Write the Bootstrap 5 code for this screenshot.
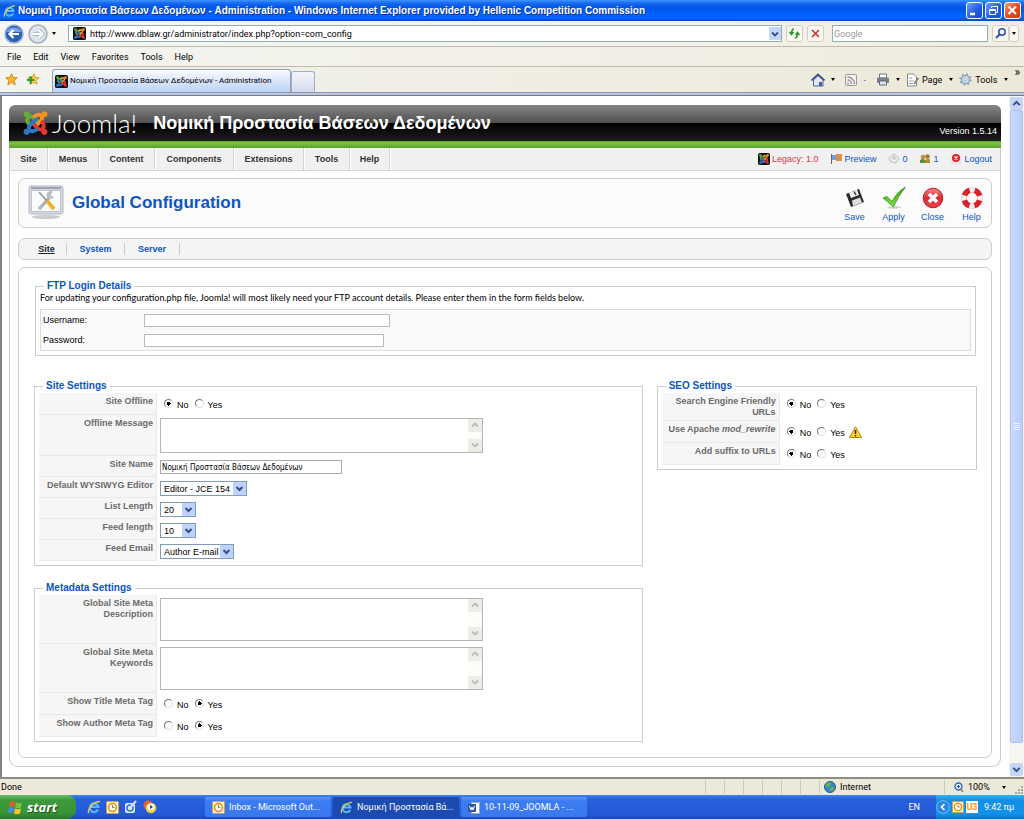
<!DOCTYPE html>
<html lang="el">
<head>
<meta charset="utf-8">
<meta name="viewport" content="width=device-width, initial-scale=1">
<title>Νομική Προστασία Βάσεων Δεδομένων - Administration</title>
<link rel="stylesheet" href="https://cdn.jsdelivr.net/npm/bootstrap@5.3.0/dist/css/bootstrap.min.css">
<style>
:root{--line:#ccc;--link:#0b55c4}
body{font-family:"Liberation Sans",sans-serif;font-size:9px;line-height:12px;color:#333;background:#fff}
a{color:inherit;text-decoration:none}
svg{display:block;flex:none}
.ui{font-family:Roboto,sans-serif;font-size:9px;color:#000}
.plain{border:0;background:none;padding:0;color:inherit;font:inherit}

/* window title */
.titlebar{height:21px;padding:0 3px;background:linear-gradient(#3c95ff 0,#1b6cf2 3px,#0055e5 7px,#0061fb 14px,#0066ff 18px,#0045c8 21px);color:#fff;gap:2px}
.titlebar h1{font:bold 10px/20px "Liberation Sans",sans-serif;margin:0;text-shadow:1px 1px #0a2f8c;white-space:nowrap}
.winbtn{width:17px;height:17px;border:1px solid #fff;border-radius:3px;padding:0;background:linear-gradient(135deg,#6f9bff,#2459dd 60%,#1a4fd0)}
.winbtn.quit{background:linear-gradient(135deg,#f29a7c,#e04e22 50%,#c83c12)}

/* browser rows */
.addressrow{height:26px;padding:0 5px 0 4px;background:linear-gradient(90deg,#f6f6f3,#f1efe3)}
.bar-edge{border-bottom:1px solid #bfbcae}
.field{height:17px;border:1px solid #8fb0b5;background:#fff}
.field input{border:0;padding:0;height:15px;outline:0;min-width:0}
.search{width:156px;padding-left:1px}
.search input::placeholder{color:#999;opacity:1}
.tinybtn{width:17px;height:17px;border:1px solid #d2cfc3;border-radius:3px;background:#f9f8f3;padding:0}
.tinybtn.slim{width:10px;padding:6px 2px}
.dropbtn{width:12px;height:13px;border:0;padding:0;background:#c6d6fb}
.menurow{height:20px;background:linear-gradient(90deg,#f4f4f0,#efecdf);padding-left:7px;gap:12px}
.tabrow{height:25px;background:linear-gradient(90deg,#f3f3ef,#ece9d8);padding:0 4px 0 5px}
.tab{width:239px;height:23px;border:1px solid #93a1b5;border-bottom:0;border-radius:3px 3px 0 0;background:linear-gradient(#fbfcff,#dfe9fb 40%,#bcd3f8);padding-left:2px;gap:2px;white-space:nowrap;font-size:8px}
.tabnew{width:24px;height:21px;border:1px solid #a5adc0;border-bottom:0;border-radius:3px 3px 0 0;background:linear-gradient(#f5f6fc,#d5dbee)}
.tabbase{height:4px;background:#bcc7e2;border-top:1px solid #8d97aa;border-bottom:1px solid #73788a}
.commands{gap:6px}
.commands a{gap:3px}
.tri{width:0;height:0;border:2px solid transparent;border-top:3px solid #000;border-bottom:0}
.more{font-size:12px;line-height:12px}

/* page area */
.view{border-left:2px solid #85857a}
.page{margin:9px 8px 8px 7px;border:1px solid var(--line);border-top:0;border-radius:6px 6px 9px 9px}
.brand{height:36px;margin:0 -1px;padding:0 4px 0 14px;border-radius:6px 6px 0 0;background:linear-gradient(#858585,#4f4f4f 18px,#000 18px,#1d1d1d);color:#fff}
.wordmark{font:300 26px/32px Lato,sans-serif}
.sitename{font-size:18px;line-height:36px;font-weight:bold;white-space:nowrap}
.green{height:7px;margin:0 -1px;background:linear-gradient(#5fa52c,#7cc440 30%,#5d9c33)}
.adminmenu{height:23px;background:#f0f0f0;border-bottom:1px solid #d5d5d5}
.adminmenu .entry{font-weight:bold;line-height:22px;text-align:center;border-right:1px solid #d5d5d5;box-shadow:1px 0 #fff}
.state{gap:2px;color:var(--link)}
.panel{border:1px solid var(--line);border-radius:7px;margin:0 8px}
.toolbox{height:50px;background:#fbfbfb;margin-top:7px;padding:0 0 0 9px}
.toolbox h2{font-size:17px;line-height:20px;font-weight:bold;color:var(--link);margin:0}
.tools{padding-top:4px}
.tool{width:39px;color:var(--link);line-height:12px}
.tool svg{margin:0 auto 2px}
.submenu{height:22px;background:#f4f4f4;margin-top:10px;padding-left:8px;font-weight:bold;color:var(--link)}
.submenu a{line-height:12px;text-align:center;border-right:1px solid var(--line)}
.settings{margin-top:7px;margin-bottom:8px;padding:12px 14px 15px 15px}
fieldset{border:1px solid var(--line)}
legend{float:none;width:auto;margin:0 0 0 4px;padding:0 3px;font-size:10px;line-height:12px;font-weight:bold;color:var(--link)}
.ftp{padding:0 4px 4px;margin:0 1px}
.ftp p{margin:0 0 5px;line-height:12px;color:#000;font-family:Lato,sans-serif}
.ftpbox{border:1px solid #ddd;background:#f9f9f9;padding:0 2px}
.ftprow{height:20px}
.ftpbox label{width:101px;color:#000}
.ftpbox input{height:13px;border:1px solid #bbb;background:#fff;padding:0 2px}
.columns{display:grid;grid-template-columns:19fr 10fr;gap:14px;margin-top:24px;align-items:start}
.group{padding:1px 4px 4px}
.setting{display:flex;min-height:21px}
.setting:has(.choice){min-height:22px}
.setting.tall{min-height:28px}
.caption{width:118px;flex:none;padding:3px 3px 0 0;font-weight:bold;line-height:11px;text-align:right;color:#6b6b6b;background:#f6f6f6;border-right:1px solid #e9e9e9;border-bottom:1px solid #e9e9e9}
.value{padding:4px 0 0 3px}
.value.area{padding-top:3px;padding-bottom:3px}
.areabox{display:flex;width:323px;border:1px solid #b5b5b5;background:#fff}
.areabox textarea{border:0;resize:none;flex:1;min-width:0;overflow:hidden;padding:1px;outline:0;font-size:9px}
.areabar{width:14px;background:#fbfbf8}
.areabar span{height:13px;background:#ededE6}
.short{height:35px}.long{height:43px}
.value.choice{display:flex;gap:6px;padding:5px 0 0 7px;color:#000}
.choice label{display:flex;align-items:flex-start;gap:4px;height:14px}
.choice label span{line-height:13px;padding-top:1px}
.choice input{appearance:none;width:9px;height:9px;margin:1px 0 0;border-radius:50%;border:1px solid;border-color:#777 #ddd #ddd #777;background:#fff;flex:none}
.choice input:checked{background:radial-gradient(circle,#000 0 2px,#fff 2px)}
.namebox{width:182px;height:14px;border:1px solid #aaa;padding:0 1px;color:#000;font-size:8px;font-family:"DejaVu Sans Condensed","DejaVu Sans",sans-serif}
.picker{appearance:none;height:15px;border:1px solid #7f9db9;padding:0 3px;font-size:9px;line-height:12px;color:#000;display:block;background:#fff url("data:image/svg+xml,%3Csvg xmlns='http://www.w3.org/2000/svg' width='13' height='13'%3E%3Crect width='13' height='13' rx='1' fill='%23bfd2fc'/%3E%3Cpath d='M3.500 5l3 3 3-3' fill='none' stroke='%23334f86' stroke-width='2'/%3E%3C/svg%3E") no-repeat right center}
.w-editor{width:87px}.w-count{width:36px}.w-mail{width:74px}

/* page scrollbar */
.rail{width:15px;background:#f6f5ef;padding:1px 1px}
.rail .cap{height:13px;border-radius:2px;background:#c6d6fb}
.rail .thumb{border:1px solid #aebff0;border-radius:2px;background:linear-gradient(90deg,#cbdafe,#b7cbfb)}

/* status and task bars */
.status{height:18px;background:#ece9d8;border-top:2px solid #8f8d80;padding:0 1px}
.status .cell{border-left:1px solid #cfccbd;height:14px}
.w-slot{width:19px}.w-zone{width:125px;padding-left:4px}.w-zoom{width:79px;padding-left:9px}
.taskbar{height:24px;background:linear-gradient(#3f86ec,#2860dc 4px,#2459d8 19px,#1d48b4)}
.taskbar.ui{color:#fff}
.start{width:76px;height:24px;border:0;padding:0 0 0 8px;border-radius:0 9px 9px 0;background:linear-gradient(#6fb96c,#3c9a3c 5px,#379437 18px,#2a762c);color:#fff;font:italic bold 13px/22px "Open Sans",sans-serif;text-shadow:1px 1px 1px #174a17;gap:4px}
.quick{width:121px;padding-left:11px;gap:5px}
.tasks{gap:2px}
.task{width:126px;height:20px;border:0;border-radius:2px;color:#fff;background:linear-gradient(#5b97fa,#3b7cf3 4px,#3a78ee);padding:0 7px;gap:4px;font-size:9px;white-space:nowrap}
.task.active{background:#1b4bb0}
.tray{width:88px;background:linear-gradient(#36b0f5,#1290e8 5px,#1191ea 19px,#0d70c0);gap:2px}
.usb{width:12px;line-height:12px;background:#fff;color:#ee9a1e;font-weight:bold;text-align:center}
</style>
</head>
<body class="d-flex flex-column min-vh-100">

<svg width="0" height="0" class="position-absolute" aria-hidden="true">
  <defs>
    <g id="arm"><circle cx="3.500" cy="3.500" r="2.900" fill="currentColor"/><path d="M6.500 14C1.500 9 5.500 3.500 9.500 6.500L16 13" fill="none" stroke="currentColor" stroke-width="3.700"/></g>
    <symbol id="joomla" viewBox="0 0 24 24">
      <use href="#arm" color="#5fae3a"/><use href="#arm" color="#f39324" transform="rotate(90 12 12)"/>
      <use href="#arm" color="#e5372b" transform="rotate(180 12 12)"/><use href="#arm" color="#2d78c4" transform="rotate(270 12 12)"/>
    </symbol>
    <symbol id="favicon" viewBox="0 0 14 14"><rect width="14" height="14" rx="2" fill="#111"/><use href="#joomla" x="1" y="1" width="12" height="12"/></symbol>
    <symbol id="ie" viewBox="0 0 14 14"><path d="M11 9.500A4.300 4.300 0 1 1 11.300 7H4" fill="none" stroke="#5bb7f5" stroke-width="2.200"/><path d="M2 13C-1 11 6 1.500 13 1.500" fill="none" stroke="#f3c84a" stroke-width="1.300"/></symbol>
    <symbol id="clock" viewBox="0 0 14 14"><rect x=".5" y=".5" width="13" height="13" rx="1" fill="#fff3c4" stroke="#e09a2a"/><circle cx="7" cy="7" r="4.200" fill="#fff" stroke="#d98a1e" stroke-width="1.600"/><path d="M7 4.500V7H9" fill="none" stroke="#a85a10"/></symbol>
    <symbol id="up" viewBox="0 0 12 12"><path d="M3 7.500L6 4.500L9 7.500" fill="none" stroke="currentColor" stroke-width="1.800"/></symbol>
    <symbol id="down" viewBox="0 0 12 12"><path d="M3 4.500L6 7.500L9 4.500" fill="none" stroke="currentColor" stroke-width="1.800"/></symbol>
    <linearGradient id="redball" x2="0" y2="1"><stop offset="0" stop-color="#f58a8c"/><stop offset=".5" stop-color="#dd2a32"/><stop offset="1" stop-color="#e8474c"/></linearGradient>
    <linearGradient id="leaf" x2="0" y2="1"><stop offset="0" stop-color="#3d9a14"/><stop offset="1" stop-color="#7be03a"/></linearGradient>
  </defs>
</svg>

<header class="ui">
  <div class="titlebar d-flex align-items-center">
    <svg width="13" height="14"><use href="#ie"/></svg>
    <h1 class="flex-grow-1 overflow-hidden">Νομική Προστασία Βάσεων Δεδομένων - Administration - Windows Internet Explorer provided by Hellenic Competition Commission</h1>
    <button class="winbtn" aria-label="Minimize"><svg width="15" height="15"><path d="M3 11h5" stroke="#fff" stroke-width="2.500"/></svg></button>
    <button class="winbtn" aria-label="Restore"><svg width="15" height="15" fill="none" stroke="#fff"><path d="M5.500 5V3.500H11.500V9.500H10M3.500 6.500H9.500V11.500H3.500ZM3.500 7.500H9.500"/></svg></button>
    <button class="winbtn quit" aria-label="Close window"><svg width="15" height="15"><path d="M3.500 3.500L11 11M11 3.500L3.500 11" stroke="#fff" stroke-width="2"/></svg></button>
  </div>

  <div class="addressrow bar-edge d-flex align-items-center">
    <button class="plain" aria-label="Back"><svg width="20" height="20"><circle cx="10" cy="10" r="9" fill="#2c62b6" stroke="#9db3d6" stroke-width="1.500"/><path d="M2.500 8a8 7 0 0 1 15 0z" fill="#7ba4de"/><path d="M15 10H6M9.500 6L5.500 10L9.500 14" fill="none" stroke="#fff" stroke-width="2.200"/></svg></button>
    <button class="plain ms-1" aria-label="Forward"><svg width="20" height="20"><circle cx="10" cy="10" r="9" fill="#dde4ee" stroke="#a5afbd" stroke-width="1.500"/><path d="M5 10H14M10.500 6L14.500 10L10.500 14" fill="none" stroke="#b4bccb" stroke-width="4"/><path d="M5 10H14M10.500 6L14.500 10L10.500 14" fill="none" stroke="#fff" stroke-width="2.200"/></svg></button>
    <span class="tri ms-1 me-1"></span>
    <div class="field d-flex align-items-center flex-grow-1 ms-2 me-1 ps-1 gap-1">
      <svg width="13" height="13"><use href="#favicon"/></svg>
      <input class="ui flex-grow-1" aria-label="Address" value="http://www.dblaw.gr/administrator/index.php?option=com_config">
      <button class="dropbtn" aria-label="Address history"><svg width="12" height="12" color="#334f86"><use href="#down"/></svg></button>
    </div>
    <button class="tinybtn me-1" aria-label="Refresh"><svg width="15" height="15" fill="none" stroke="#2c9b2c" stroke-width="1.600"><path d="M7 3C5 3 4.500 5 4.500 8M2.500 6L4.500 8.500L6.500 6M8 12C10 12 10.500 10 10.500 7M8.500 9L10.500 6.500L12.500 9"/></svg></button>
    <button class="tinybtn me-2" aria-label="Stop"><svg width="15" height="15"><path d="M4 4L11 11M11 4L4 11" stroke="#c8322c" stroke-width="1.600"/></svg></button>
    <div class="field search d-flex"><input class="ui w-100" aria-label="Search" placeholder="Google"></div>
    <button class="tinybtn ms-1" aria-label="Run search"><svg width="15" height="15" fill="none" stroke="#2a52b8"><circle cx="9" cy="6" r="3.200" stroke-width="1.600"/><path d="M6.500 8.500L3 12" stroke-width="2"/></svg></button>
    <button class="tinybtn slim" aria-label="Search options"><span class="tri d-block"></span></button>
  </div>

  <nav class="menurow bar-edge d-flex align-items-center" aria-label="Browser menu">
    <a href="#">File</a><a href="#">Edit</a><a href="#">View</a><a href="#">Favorites</a><a href="#">Tools</a><a href="#">Help</a>
  </nav>

  <div class="tabrow d-flex align-items-end">
    <div class="d-flex align-items-center gap-2 align-self-center pe-2 me-1">
      <svg width="13" height="13" viewBox="0 0 14 14"><path d="M7 .8L8.900 5H13.200L9.800 8L11 12.800L7 10L3 12.800L4.200 8L.8 5H5.100Z" fill="#fbb92c" stroke="#d57f12"/></svg>
      <svg width="14" height="13" viewBox="0 0 14 14"><path d="M8 .8L9.700 5H13.500L10.500 8L11.500 12L8 10L4 12L5 8L2 5H6.100Z" fill="#fbd14c" stroke="#d59a22"/><path d="M4.500 3.500V11.500M.5 7.500H8.500" stroke="#2d9a2d" stroke-width="2.400"/></svg>
    </div>
    <a href="#" class="tab d-flex align-items-center"><svg width="13" height="13"><use href="#favicon"/></svg>Νομική Προστασία Βάσεων Δεδομένων - Administration</a>
    <button class="tabnew" aria-label="New tab"></button>
    <div class="commands d-flex align-items-center ms-auto align-self-center">
      <button class="plain" aria-label="Home"><svg width="14" height="14"><path d="M2.500 7V13H12V7L7 2.500Z" fill="#dfe6f4" stroke="#55618c"/><path d="M.5 7.500L7 1.500L13.500 7.500" fill="none" stroke="#3b4c8c" stroke-width="1.700"/><path d="M8 9h3v4h-3z" fill="#3a5fae"/></svg></button>
      <span class="tri me-1"></span>
      <button class="plain" aria-label="Feeds"><svg width="12" height="12" fill="none" stroke="#999"><rect x=".5" y=".5" width="11" height="11" rx="1" fill="#eee"/><path d="M2.500 6A4 4 0 0 1 6.500 10M2.500 3A7 7 0 0 1 9.500 10" stroke-width="1.400"/><circle cx="3" cy="9.500" r=".7"/></svg></button>
      <span class="text-secondary">-</span>
      <button class="plain ms-1" aria-label="Print"><svg width="14" height="13"><path d="M3.500 1H10.500V5H3.500Z" fill="#fff" stroke="#777"/><rect x="1" y="4.500" width="12" height="5.500" rx="1" fill="#7b8190"/><path d="M3.500 8H10.500V12H3.500Z" fill="#dfe7f5" stroke="#666"/></svg></button>
      <span class="tri"></span>
      <a href="#" class="d-flex align-items-center"><svg width="13" height="14"><path d="M1.500 1H7.500L10.500 4V13H1.500Z" fill="#fff" stroke="#888"/><path d="M3 5H6M3 8H8M3 10.500H7" stroke="#8aa"/><path d="M12.500 5L8 11" stroke="#777" stroke-width="1.500"/></svg>Page <span class="tri ms-1"></span></a>
      <a href="#" class="d-flex align-items-center"><svg width="13" height="13"><circle cx="6.500" cy="6.500" r="4" fill="#dce9f3" stroke="#8ba6ba" stroke-width="1.600"/><circle cx="6.500" cy="6.500" r="5.500" fill="none" stroke="#8ba6ba" stroke-width="1.600" stroke-dasharray="2 2.300"/><circle cx="6.500" cy="6.500" r="1.500" fill="#fff" stroke="#8ba6ba"/></svg>Tools <span class="tri ms-1"></span></a>
      <span class="more pb-3">»</span>
    </div>
  </div>
  <div class="tabbase"></div>
</header>

<div class="view d-flex flex-grow-1">
  <main class="flex-grow-1">
    <div class="page">
      <div class="brand d-flex align-items-center">
        <svg width="25" height="26"><use href="#joomla"/></svg>
        <span class="wordmark ms-1">Joomla!</span>
        <span class="sitename ms-3">Νομική Προστασία Βάσεων Δεδομένων</span>
        <span class="ms-auto align-self-end pb-1">Version 1.5.14</span>
      </div>
      <div class="green"></div>
      <div class="adminmenu d-flex">
        <a class="entry" href="#" style="width:38px">Site</a><a class="entry" href="#" style="width:51px">Menus</a><a class="entry" href="#" style="width:56px">Content</a><a class="entry" href="#" style="width:79px">Components</a><a class="entry" href="#" style="width:70px">Extensions</a><a class="entry" href="#" style="width:46px">Tools</a><a class="entry" href="#" style="width:40px">Help</a>
        <div class="d-flex align-items-center gap-2 ms-auto pe-2">
          <a href="#" class="state d-flex align-items-center text-danger me-1"><svg width="12" height="12"><use href="#favicon"/></svg>Legacy: 1.0</a>
          <a href="#" class="state d-flex align-items-center me-1"><svg width="12" height="12"><rect x="1" y="2" width="6" height="5" fill="#6fa3d8"/><rect x="6" y="1" width="6" height="7" fill="#d8924a"/><path d="M1.500 1V11" stroke="#666"/></svg>Preview</a>
          <a href="#" class="state d-flex align-items-center me-1"><svg width="12" height="12"><path d="M1 5L6 1L11 5L8 10L3 9Z" fill="#eee" stroke="#bbb"/><circle cx="6" cy="5" r="2" fill="#ccc"/></svg>0</a>
          <a href="#" class="state d-flex align-items-center me-1"><svg width="12" height="12"><circle cx="4" cy="4" r="2.300" fill="#c68a3a"/><circle cx="8.500" cy="3.500" r="2.300" fill="#a8762e"/><path d="M1 10V7Q4 5 6 7V10Z" fill="#5a8f3c"/><path d="M6 10V7Q9 5 11 6.500V10Z" fill="#b98a2e"/></svg>1</a>
          <a href="#" class="state d-flex align-items-center"><svg width="12" height="12"><rect x="1" y="2" width="10" height="9" fill="#e6e6e6"/><circle cx="6" cy="5" r="4" fill="#d9252a"/><path d="M4.500 3.500L7.500 6.500M7.500 3.500L4.500 6.500" stroke="#fff" stroke-width="1.300"/></svg>Logout</a>
        </div>
      </div>

      <div class="panel toolbox d-flex align-items-center">
        <svg width="36" height="36"><ellipse cx="18" cy="32" rx="14" ry="2" fill="#ccc"/><rect x="1" y="1" width="34" height="28" rx="2" fill="#d5d8df" stroke="#b4b8c2"/><path d="M3 3H33" stroke="#9da3b3" stroke-width="2"/><rect x="3.500" y="5.500" width="29" height="21" fill="#fafbfd" stroke="#bfc5d0"/><path d="M12 23L22 12" stroke="#a9adb4" stroke-width="3"/><path d="M25 7A4 4 0 1 0 26 12L23 11V9Z" fill="#b9bdc4"/><path d="M11 7L19 16" stroke="#8d9198" stroke-width="1.500"/><path d="M19 16L26 24" stroke="#e9b22f" stroke-width="4"/><circle cx="12" cy="23" r="2" fill="#b9bdc4"/></svg>
        <h2 class="ms-2 flex-grow-1">Global Configuration</h2>
        <div class="tools d-flex text-center">
          <button class="tool plain"><svg width="24" height="22"><path d="M3 7L16 2L21 15L8 20Z" fill="#2b2b2b"/><path d="M6 5.800L14 2.800L16 8L8 11Z" fill="#eee"/><path d="M11 4.500L13 8" stroke="#333" stroke-width="1.500"/><path d="M9 13.500L17 10.500L19 15.500L10 19Z" fill="#ddd"/></svg>Save</button>
          <button class="tool plain"><svg width="24" height="22"><ellipse cx="12" cy="20.500" rx="7" ry="1.200" fill="#ccc"/><path d="M1 11L5 9.500L10 14.500Q15 5 23.500 0Q16 9 11.500 20Q6 15 1 11Z" fill="url(#leaf)" stroke="#3b941a" stroke-width=".8"/></svg>Apply</button>
          <button class="tool plain"><svg width="24" height="22"><circle cx="12" cy="11" r="9.800" fill="url(#redball)" stroke="#b81c24"/><path d="M8 7L16 15M16 7L8 15" stroke="#fff" stroke-width="3.500"/></svg>Close</button>
          <button class="tool plain"><svg width="24" height="22"><circle cx="12" cy="11" r="8" fill="none" stroke="#d9cfcf" stroke-width="5.500"/><circle cx="12" cy="11" r="8" fill="none" stroke="#f6f2f2" stroke-width="4"/><circle cx="12" cy="11" r="8" fill="none" stroke="#d8222b" stroke-width="5.500" stroke-dasharray="7.500 5.060" stroke-dashoffset="-2.500"/></svg>Help</button>
        </div>
      </div>

      <nav class="panel submenu d-flex align-items-center" aria-label="Configuration sections">
        <a href="#" class="text-dark text-decoration-underline" style="width:40px">Site</a><a href="#" style="width:58px">System</a><a href="#" style="width:55px">Server</a>
      </nav>

      <form class="panel settings">
        <fieldset class="ftp">
          <legend>FTP Login Details</legend>
          <p>For updating your configuration.php file, Joomla! will most likely need your FTP account details. Please enter them in the form fields below.</p>
          <div class="ftpbox">
            <div class="ftprow d-flex align-items-center"><label for="u">Username:</label><input id="u" type="text" style="width:246px"></div>
            <div class="ftprow d-flex align-items-center"><label for="p">Password:</label><input id="p" type="password" style="width:240px"></div>
          </div>
        </fieldset>

        <div class="columns">
          <div>
            <fieldset class="group">
              <legend>Site Settings</legend>
              <div class="setting"><span class="caption">Site Offline</span><div class="value choice"><label><input type="radio" name="off" checked><span>No</span></label><label><input type="radio" name="off"><span>Yes</span></label></div></div>
              <div class="setting"><label class="caption" for="msg">Offline Message</label><div class="value area"><div class="areabox short"><textarea id="msg"></textarea><div class="areabar d-flex flex-column justify-content-between"><span><svg width="14" height="12" color="#bbb"><use href="#up"/></svg></span><span><svg width="14" height="12" color="#bbb"><use href="#down"/></svg></span></div></div></div></div>
              <div class="setting"><label class="caption" for="name">Site Name</label><div class="value"><input id="name" class="namebox d-block" value="Νομική Προστασία Βάσεων Δεδομένων"></div></div>
              <div class="setting"><label class="caption" for="ed">Default WYSIWYG Editor</label><div class="value"><select id="ed" class="picker w-editor"><option>Editor - JCE 154</option></select></div></div>
              <div class="setting"><label class="caption" for="ll">List Length</label><div class="value"><select id="ll" class="picker w-count"><option>20</option></select></div></div>
              <div class="setting"><label class="caption" for="fl">Feed length</label><div class="value"><select id="fl" class="picker w-count"><option>10</option></select></div></div>
              <div class="setting"><label class="caption" for="fe">Feed Email</label><div class="value"><select id="fe" class="picker w-mail"><option>Author E-mail</option></select></div></div>
            </fieldset>
            <fieldset class="group mt-3">
              <legend>Metadata Settings</legend>
              <div class="setting"><label class="caption" for="md">Global Site Meta<br>Description</label><div class="value area"><div class="areabox long"><textarea id="md"></textarea><div class="areabar d-flex flex-column justify-content-between"><span><svg width="14" height="12" color="#bbb"><use href="#up"/></svg></span><span><svg width="14" height="12" color="#bbb"><use href="#down"/></svg></span></div></div></div></div>
              <div class="setting"><label class="caption" for="mk">Global Site Meta<br>Keywords</label><div class="value area"><div class="areabox long"><textarea id="mk"></textarea><div class="areabar d-flex flex-column justify-content-between"><span><svg width="14" height="12" color="#bbb"><use href="#up"/></svg></span><span><svg width="14" height="12" color="#bbb"><use href="#down"/></svg></span></div></div></div></div>
              <div class="setting"><span class="caption">Show Title Meta Tag</span><div class="value choice"><label><input type="radio" name="tt"><span>No</span></label><label><input type="radio" name="tt" checked><span>Yes</span></label></div></div>
              <div class="setting"><span class="caption">Show Author Meta Tag</span><div class="value choice"><label><input type="radio" name="ta"><span>No</span></label><label><input type="radio" name="ta" checked><span>Yes</span></label></div></div>
            </fieldset>
          </div>
          <fieldset class="group">
            <legend>SEO Settings</legend>
            <div class="setting tall"><span class="caption">Search Engine Friendly URLs</span><div class="value choice"><label><input type="radio" name="sef" checked><span>No</span></label><label><input type="radio" name="sef"><span>Yes</span></label></div></div>
            <div class="setting"><span class="caption">Use Apache <i>mod_rewrite</i></span><div class="value choice"><label><input type="radio" name="rw" checked><span>No</span></label><label><input type="radio" name="rw"><span>Yes</span><svg width="13" height="13"><path d="M6.500 .8L12.500 11.500H.5Z" fill="#ffd42a" stroke="#b8860b"/><path d="M6.500 4V8M6.500 9V10.500" stroke="#222" stroke-width="1.500"/></svg></label></div></div>
            <div class="setting"><span class="caption">Add suffix to URLs</span><div class="value choice"><label><input type="radio" name="sx" checked><span>No</span></label><label><input type="radio" name="sx"><span>Yes</span></label></div></div>
          </fieldset>
        </div>
      </form>
    </div>
  </main>
  <div class="rail d-flex flex-column" aria-hidden="true">
    <div class="cap"><svg width="13" height="13" color="#334f86"><use href="#up"/></svg></div>
    <div class="thumb flex-grow-1 mb-3 d-flex align-items-center justify-content-center"><svg width="6" height="8" stroke="#eef3ff"><path d="M0 .5H6M0 2.500H6M0 4.500H6M0 6.500H6"/></svg></div>
    <div class="cap mt-1"><svg width="13" height="13" color="#334f86"><use href="#down"/></svg></div>
  </div>
</div>

<footer class="ui">
  <div class="status d-flex align-items-center">
    <span class="flex-grow-1">Done</span>
    <span class="cell w-slot"></span><span class="cell w-slot"></span><span class="cell w-slot"></span><span class="cell w-slot"></span><span class="cell w-slot"></span><span class="cell w-slot"></span>
    <span class="cell w-zone d-flex align-items-center gap-1"><svg width="12" height="12"><circle cx="6" cy="6" r="5.500" fill="#3c86c8" stroke="#255a8c"/><path d="M2 3Q5 0 7 2Q6 5 4 6Q2 6 2 3ZM7 6Q11 5 10 8Q8 11 6 9Z" fill="#5fb84c"/></svg>Internet</span>
    <span class="cell w-zoom d-flex align-items-center gap-1"><svg width="10" height="11"><path d="M6 6L9 10" stroke="#c58a4a" stroke-width="2"/><circle cx="4.500" cy="4.500" r="3.500" fill="#dcebff" stroke="#3567c8" stroke-width="1.400"/><path d="M4.500 3V6M3 4.500H6" stroke="#2450a0"/></svg>100%<span class="tri ms-2"></span><svg width="9" height="9" class="ms-auto align-self-end" fill="#aaa79a"><path d="M7 1h2v2h-2zM4 4h2v2h-2zM7 4h2v2h-2zM1 7h2v2h-2zM4 7h2v2h-2zM7 7h2v2h-2z"/></svg></span>
  </div>
  <div class="taskbar ui d-flex align-items-center">
    <button class="start d-flex align-items-center"><svg width="15" height="15"><path d="M2 2Q5 .5 7 2L6 7Q4 5.500 1 7Z" fill="#ee5a28"/><path d="M8 2.500Q11 4 14 2.500L13 7.500Q10 9 7 7.500Z" fill="#7bc142"/><path d="M1 8Q4 6.500 6 8L5 13Q3 11.500 0 13Z" fill="#3f8df0"/><path d="M7 8.500Q10 10 13 8.500L12 13.500Q9 15 6 13.500Z" fill="#fbc42c"/></svg>start</button>
    <div class="quick d-flex align-items-center flex-shrink-0">
      <svg width="14" height="14"><use href="#ie"/></svg>
      <svg width="13" height="13"><use href="#clock"/></svg>
      <svg width="14" height="14"><rect x="1" y="3" width="10" height="10" rx="2" fill="#dcebff"/><circle cx="6" cy="8" r="3" fill="none" stroke="#2b75c8" stroke-width="1.500"/><path d="M6 8L12 1" stroke="#cfe2f8" stroke-width="2"/></svg>
      <svg width="14" height="14"><circle cx="5" cy="5" r="4.500" fill="#e5602c"/><circle cx="8" cy="8" r="5.300" fill="#f4c83c"/><circle cx="8" cy="7" r="3.500" fill="#fff"/><path d="M7 5L10 7L7 9Z" fill="#246"/></svg>
    </div>
    <div class="tasks d-flex ms-2">
      <button class="task d-flex align-items-center"><svg width="13" height="13"><use href="#clock"/></svg>Inbox - Microsoft Out...</button>
      <button class="task active d-flex align-items-center"><svg width="13" height="13"><use href="#ie"/></svg>Νομική Προστασία Βά...</button>
      <button class="task d-flex align-items-center"><svg width="12" height="13"><rect x="3.500" y="1.500" width="8" height="11" fill="#fff" stroke="#9ab"/><rect x="0" y="3" width="8" height="8" fill="#2f57a8"/><path d="M1.500 5L3 9L4 6L5 9L6.500 5" fill="none" stroke="#fff"/></svg>10-11-09_JOOMLA - ...</button>
    </div>
    <span class="ms-auto me-3">EN</span>
    <div class="tray d-flex align-items-center align-self-stretch">
      <svg width="14" height="14"><circle cx="7" cy="7" r="6.300" fill="#2c82e0" stroke="#7cc0f5"/><path d="M8.500 4L5.500 7L8.500 10" fill="none" stroke="#fff" stroke-width="1.700"/></svg>
      <svg width="12" height="12"><use href="#clock"/></svg>
      <span class="usb">U3</span>
      <span class="ms-1 text-nowrap">9:42 πμ</span>
    </div>
  </div>
</footer>
<script src="https://cdn.jsdelivr.net/npm/bootstrap@5.3.0/dist/js/bootstrap.bundle.min.js"></script>
</body>
</html>
